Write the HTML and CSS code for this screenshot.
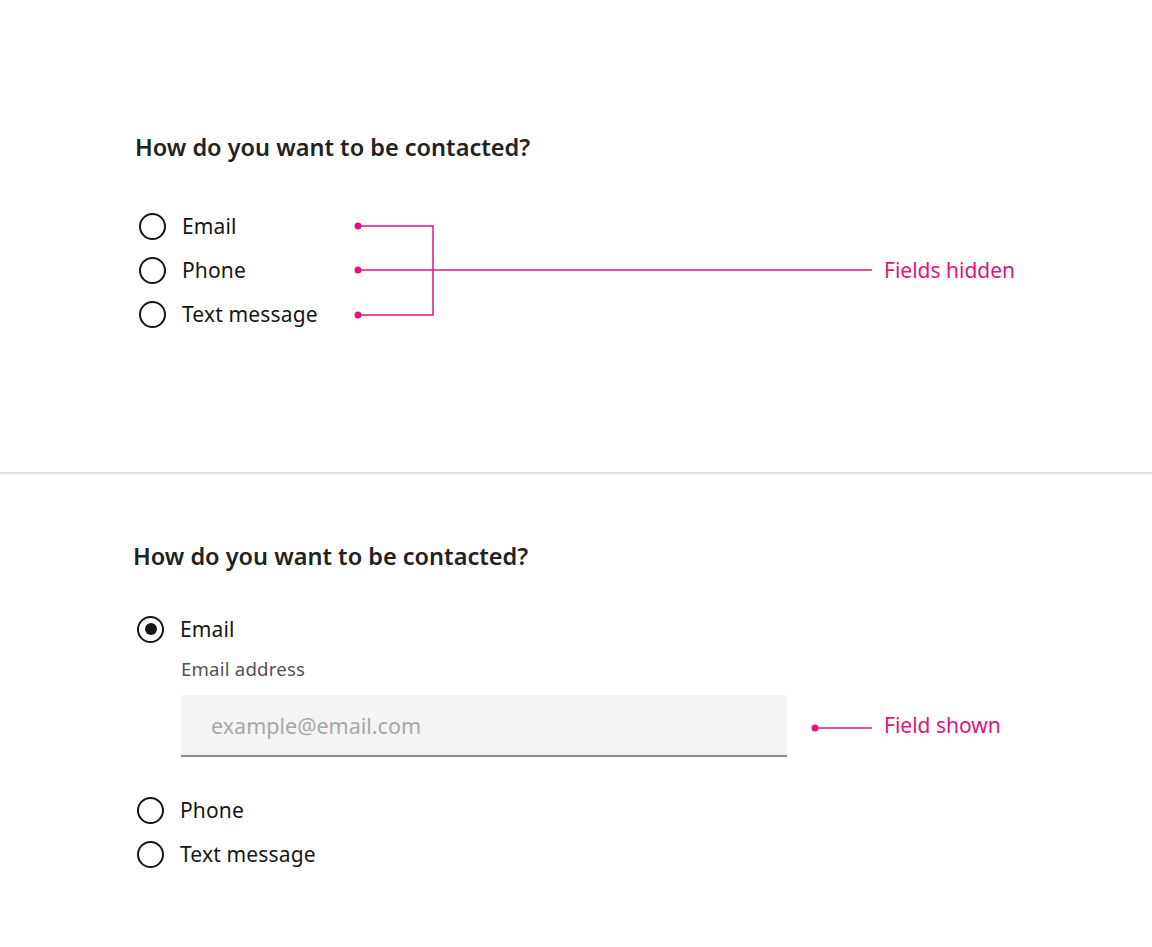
FILE: index.html
```html
<!DOCTYPE html>
<html lang="en">
<head>
<meta charset="utf-8">
<title>Contact preference</title>
<link rel="stylesheet" href="styles.css">
</head>
<body>
<section class="panel panel-top">
  <div class="form">
    <h2 class="legend">How do you want to be contacted?</h2>
    <div class="options">
      <label class="option"><span class="radio"></span><span class="opt-text">Email</span></label>
      <label class="option"><span class="radio"></span><span class="opt-text">Phone</span></label>
      <label class="option"><span class="radio"></span><span class="opt-text">Text message</span></label>
    </div>
  </div>
  <div class="note note-hidden">
    <svg class="bracket" width="522" height="100" viewBox="0 0 522 100">
      <g stroke="#e2137b" stroke-width="1.5" fill="none">
        <path d="M4 6 H79 V95 H4"/>
        <path d="M4 50 H518"/>
      </g>
      <g fill="#e2137b">
        <circle cx="4" cy="6" r="3.5"/>
        <circle cx="4" cy="50" r="3.5"/>
        <circle cx="4" cy="95" r="3.5"/>
      </g>
    </svg>
    <span class="note-text">Fields hidden</span>
  </div>
</section>
<hr class="divider">
<section class="panel panel-bottom">
  <div class="form form-2">
    <h2 class="legend">How do you want to be contacted?</h2>
    <div class="options">
      <label class="option"><span class="radio checked"></span><span class="opt-text">Email</span></label>
      <div class="field">
        <div class="field-label">Email address</div>
        <div class="input"><span class="placeholder">example@email.com</span></div>
      </div>
      <label class="option"><span class="radio"></span><span class="opt-text">Phone</span></label>
      <label class="option"><span class="radio"></span><span class="opt-text">Text message</span></label>
    </div>
  </div>
  <div class="note note-shown">
    <svg width="64" height="10" viewBox="0 0 64 10">
      <path d="M4 5 H61" stroke="#e2137b" stroke-width="1.5"/>
      <circle cx="4" cy="5" r="3.5" fill="#e2137b"/>
    </svg>
    <span class="note-text note-text-up">Field shown</span>
  </div>
</section>
</body>
</html>
```
FILE: styles.css
```css
* { box-sizing: border-box; }
html, body { margin: 0; padding: 0; background: #ffffff; }
body {
  font-family: "Noto Sans", "Open Sans", sans-serif;
  color: #161616;
  width: 1152px;
  height: 947px;
  overflow: hidden;
}
.panel { position: relative; }
.panel-top { height: 472px; padding: 132px 0 0 135px; }
.panel-bottom { height: 473px; padding: 67px 0 0 133px; }
.divider {
  margin: 0;
  border: 0;
  height: 2px;
  background: #e0e0e0;
}
.legend {
  margin: 0;
  font-size: 23.5px;
  line-height: 30px;
  font-weight: 600;
  color: #222222;
  letter-spacing: 0;
}
.options { display: flex; flex-direction: column; margin-top: 42px; }
.form-2 .options { margin-top: 36px; }
.option {
  display: flex;
  align-items: center;
  height: 44px;
  gap: 16px;
}
.radio {
  width: 27px;
  height: 27px;
  border: 2px solid #161616;
  border-radius: 50%;
  display: flex;
  align-items: center;
  justify-content: center;
  flex: none;
  margin-left: 4px;
}
.radio.checked::after {
  content: "";
  width: 12px;
  height: 12px;
  border-radius: 50%;
  background: #161616;
}
.opt-text { font-size: 21px; line-height: 28px; letter-spacing: 0.15px; }
.field { padding-left: 48px; margin-top: 7px; margin-bottom: 31px; }
.field-label {
  font-size: 18.6px;
  line-height: 22px;
  color: #525252;
  letter-spacing: 0.2px;
}
.input {
  margin-top: 15px;
  width: 606px;
  height: 62px;
  background: #f4f4f4;
  border-bottom: 2px solid #8d8d8d;
  display: flex;
  align-items: center;
  padding-left: 30px;
}
.placeholder { font-size: 21.5px; color: #a8a8a8; }
.note {
  position: absolute;
  display: flex;
  align-items: center;
  color: #e2137b;
  font-size: 21px;
}
.note-hidden { left: 354px; top: 220px; gap: 8px; }
.note-shown { left: 811px; top: 239px; gap: 9px; }
.note-text { line-height: 24px; }
.note-text-up { margin-bottom: 6px; }
```
